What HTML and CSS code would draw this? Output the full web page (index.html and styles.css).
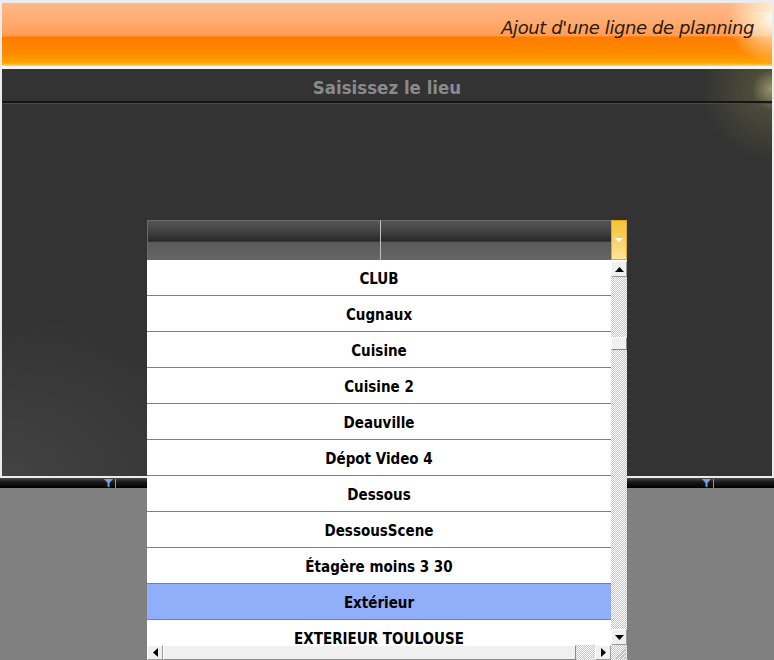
FILE: index.html
```html
<!DOCTYPE html>
<html lang="fr">
<head>
<meta charset="utf-8">
<title>Ajout d'une ligne de planning</title>
<link rel="stylesheet" href="styles.css">
</head>
<body>
<div class="window">
  <div class="frame">
    <div class="header">
      <div class="header-title">Ajout d'une ligne de planning</div>
    </div>
    <div class="sep"></div>
    <div class="panel">
      <div class="panel-title">Saisissez le lieu</div>
    </div>
  </div>
  <div class="bar">
    <span class="filter f1"><svg width="9" height="9" viewBox="0 0 9 9"><path d="M0 0H9L5.5 4V8.5L3.5 7.5V4Z" fill="#6fa6e0"/></svg><i></i></span>
    <span class="filter f2"><svg width="9" height="9" viewBox="0 0 9 9"><path d="M0 0H9L5.5 4V8.5L3.5 7.5V4Z" fill="#6fa6e0"/></svg><i></i></span>
  </div>
  <div class="rest"></div>
</div>

<div class="dropdown">
  <div class="dd-head">
    <div class="dd-col c1"></div>
    <div class="dd-col c2"></div>
    <div class="dd-btn"><svg width="8" height="5" viewBox="0 0 8 5"><path d="M0 0H8L4 4.5Z" fill="#ffffff"/></svg></div>
  </div>
  <div class="dd-body">
    <div class="dd-list">
      <div class="row">CLUB</div>
      <div class="row">Cugnaux</div>
      <div class="row">Cuisine</div>
      <div class="row">Cuisine 2</div>
      <div class="row">Deauville</div>
      <div class="row">Dépot Video 4</div>
      <div class="row">Dessous</div>
      <div class="row">DessousScene</div>
      <div class="row">Étagère moins 3 30</div>
      <div class="row sel">Extérieur</div>
      <div class="row">EXTERIEUR TOULOUSE</div>
    </div>
    <div class="vscroll">
      <div class="sbtn up"><svg width="9" height="5" viewBox="0 0 9 5"><path d="M0 5H9L4.5 0Z" fill="#000"/></svg></div>
      <div class="vtrack"><div class="vthumb"></div></div>
      <div class="sbtn down"><svg width="9" height="5" viewBox="0 0 9 5"><path d="M0 0H9L4.5 5Z" fill="#000"/></svg></div>
    </div>
  </div>
  <div class="dd-foot">
    <div class="sbtn left"><svg width="5" height="9" viewBox="0 0 5 9"><path d="M5 0V9L0 4.5Z" fill="#000"/></svg></div>
    <div class="htrack"><div class="hthumb"></div></div>
    <div class="sbtn right"><svg width="5" height="9" viewBox="0 0 5 9"><path d="M0 0V9L5 4.5Z" fill="#000"/></svg></div>
    <div class="corner"><svg width="14" height="14" viewBox="0 0 14 14"><path d="M13 3L3 13M13 7L7 13M13 11L11 13" stroke="#c0c0c0" stroke-width="1"/></svg></div>
  </div>
</div>
</body>
</html>
```
FILE: styles.css
```css
html, body {
  margin: 0;
  padding: 0;
}
body {
  width: 774px;
  height: 660px;
  overflow: hidden;
  background: #808080;
  font-family: "Liberation Sans", Arial, sans-serif;
}
.window {
  display: flex;
  flex-direction: column;
  height: 660px;
}
.frame {
  background: #ececec;
  padding: 3px 2px 2px 2px;
  display: flex;
  flex-direction: column;
}
.header {
  height: 63px;
  background:
    radial-gradient(circle at 100% 25%, rgba(255,255,240,0.95) 0, rgba(255,250,220,0.6) 18px, rgba(255,230,180,0) 45px),
    linear-gradient(to bottom, #ffb888 0%, #ffab70 30%, #ff9c52 52%, #ff7c00 54%, #ff8a00 80%, #ffa400 95%, #ffd27a 100%);
  display: flex;
  align-items: flex-start;
  justify-content: flex-end;
  padding-right: 18px;
  padding-top: 14px;
  box-sizing: border-box;
}
.header-title {
  font-family: "DejaVu Sans", sans-serif;
  font-style: italic;
  font-size: 18px;
  letter-spacing: -0.4px;
  color: #2b1a0c;
}
.sep {
  height: 3px;
  background: linear-gradient(to bottom, #ffffff, #f6f2e6);
}
.panel {
  height: 407px;
  background:
    radial-gradient(ellipse 230px 160px at 0% 100%, rgba(80,80,80,0.55), rgba(51,51,51,0) 100%),
    radial-gradient(circle at 100% 5%, rgba(240,230,160,0.55) 0, rgba(150,150,80,0.25) 20px, rgba(51,51,51,0) 70px),
    #333333;
  display: flex;
  flex-direction: column;
}
.panel-title {
  height: 34px;
  border-bottom: 2px solid #151515;
  box-shadow: 0 1px 0 #4a4a4a;
  display: flex;
  align-items: center;
  justify-content: center;
  font-family: "DejaVu Sans Condensed", "DejaVu Sans", sans-serif;
  font-weight: bold;
  font-size: 18.5px;
  color: #8a8a8a;
  padding-top: 5px;
  box-sizing: border-box;
}
.bar {
  height: 10px;
  background: linear-gradient(to bottom, #4a4a4a, #1a1a1a 40%, #000 100%);
  position: relative;
}
.filter {
  position: absolute;
  top: 1px;
  display: flex;
  align-items: center;
  gap: 2px;
}
.filter i {
  display: block;
  width: 1px;
  height: 9px;
  background: #999;
}
.f1 { left: 104px; }
.f2 { left: 702px; }
.rest {
  flex: 1;
  background: #808080;
}

/* dropdown */
.dropdown {
  position: absolute;
  left: 147px;
  top: 220px;
  width: 480px;
  height: 440px;
  display: flex;
  flex-direction: column;
}
.dd-head {
  height: 40px;
  display: flex;
  flex-shrink: 0;
}
.dd-col {
  height: 40px;
  box-sizing: border-box;
  border-top: 1px solid #6a6a6a;
  background: linear-gradient(to bottom, #555 0%, #444 25%, #2a2a2a 50%, #303030 52%, #5a5a5a 55%, #666 100%);
}
.c1 {
  width: 234px;
  border-left: 1px solid #6a6a6a;
  border-right: 1px solid #c0c0c0;
}
.c2 {
  width: 230px;
}
.dd-btn {
  width: 16px;
  height: 40px;
  box-sizing: border-box;
  border: 1px solid #e0a820;
  background: linear-gradient(to bottom, #f6c438 0%, #f8d060 50%, #fde59c 100%);
  display: flex;
  align-items: center;
  justify-content: center;
}
.dd-body {
  height: 385px;
  display: flex;
  flex-shrink: 0;
}
.dd-list {
  width: 464px;
  background: #ffffff;
  overflow: hidden;
}
.row {
  height: 35px;
  box-sizing: border-box;
  padding-top: 2px;
  height: 36px;
  border-bottom: 1px solid #808080;
  display: flex;
  align-items: center;
  justify-content: center;
  font-family: "DejaVu Sans Condensed", "DejaVu Sans", sans-serif;
  font-weight: bold;
  font-size: 15px;
  color: #000;
}
.row.sel {
  background: #91aefb;
}
.vscroll {
  width: 16px;
  display: flex;
  flex-direction: column;
  background-color: #fff;
}
.sbtn {
  width: 16px;
  height: 16px;
  box-sizing: border-box;
  background: #f0f0f0;
  border-top: 1px solid #fff;
  border-left: 1px solid #fff;
  border-right: 1px solid #9a9a9a;
  border-bottom: 1px solid #9a9a9a;
  display: flex;
  align-items: center;
  justify-content: center;
  flex-shrink: 0;
}
.sbtn.up { margin-top: 1px; }
.vtrack, .htrack, .corner {
  background-color: #ffffff;
  background-image: conic-gradient(#c6c6c6 25%, #ffffff 0 50%, #c6c6c6 0 75%, #ffffff 0);
  background-size: 2px 2px;
}
.vtrack {
  flex: 1;
  display: flex;
  flex-direction: column;
}
.vthumb {
  margin-top: 60px;
  width: 16px;
  height: 13px;
  box-sizing: border-box;
  background: #f0f0f0;
  border-top: 1px solid #fff;
  border-left: 1px solid #fff;
  border-right: 1px solid #8a8a8a;
  border-bottom: 1px solid #8a8a8a;
}
.dd-foot {
  height: 15px;
  display: flex;
  flex-shrink: 0;
}
.dd-foot .sbtn {
  height: 15px;
}
.htrack {
  width: 432px;
  display: flex;
}
.hthumb {
  width: 413px;
  height: 15px;
  box-sizing: border-box;
  background: #f0f0f0;
  border-top: 1px solid #fff;
  border-left: 1px solid #fff;
  border-right: 1px solid #8a8a8a;
  border-bottom: 1px solid #8a8a8a;
}
.corner {
  width: 16px;
  height: 15px;
  display: flex;
  align-items: flex-end;
  justify-content: flex-end;
}
.corner svg { display: block; }
```
